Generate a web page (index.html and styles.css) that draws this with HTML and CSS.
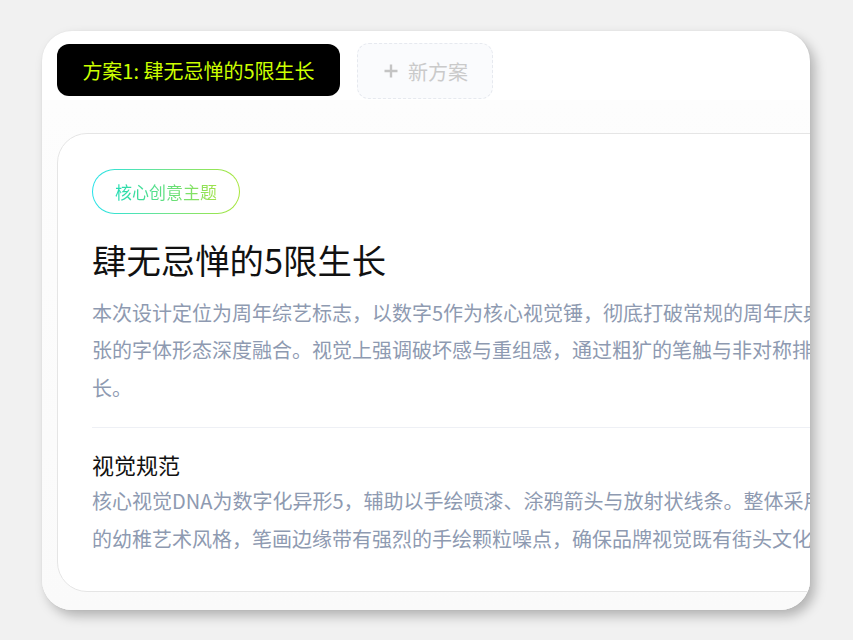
FILE: index.html
```html
<!DOCTYPE html>
<html lang="zh-CN">
<head>
<meta charset="utf-8">
<title>方案</title>
<link rel="stylesheet" href="styles.css">
</head>
<body>
<div class="panel">
  <div class="tabbar">
    <div class="tab tab-active">方案1: 肆无忌惮的5限生长</div>
    <div class="tab tab-new">
      <svg class="plus" width="14" height="14" viewBox="0 0 14 14"><path d="M7 0.5V13.5M0.5 7H13.5" stroke="#c4c4c4" stroke-width="2.4" fill="none"/></svg>
      <span>新方案</span>
    </div>
  </div>
  <div class="body">
    <div class="card">
      <div class="badge"><span class="badge-text">核心创意主题</span></div>
      <h1 class="title">肆无忌惮的5限生长</h1>
      <p class="desc">本次设计定位为周年综艺标志，以数字5作为核心视觉锤，彻底打破常规的周年庆典框架，与极度夸张的字体形态深度融合。视觉上强调破坏感与重组感，通过粗犷的笔触与非对称排版，展现出野蛮生长。</p>
      <div class="divider"></div>
      <h2 class="subtitle">视觉规范</h2>
      <p class="desc">核心视觉DNA为数字化异形5，辅助以手绘喷漆、涂鸦箭头与放射状线条。整体采用类似儿童涂鸦般的幼稚艺术风格，笔画边缘带有强烈的手绘颗粒噪点，确保品牌视觉既有街头文化的张扬与活力。</p>
    </div>
  </div>
</div>
</body>
</html>
```

FILE: styles.css
```css
html, body {
  margin: 0;
  padding: 0;
}
body {
  width: 853px;
  height: 640px;
  background: #f1f1f1;
  font-family: "Noto Sans CJK SC", "Noto Sans", sans-serif;
  overflow: hidden;
}
.panel {
  margin: 31px 0 0 42px;
  width: 768px;
  height: 579px;
  background: #ffffff;
  border-radius: 30px;
  box-shadow: 5px 6px 12px rgba(0, 0, 0, 0.26), 0 0 2px rgba(0, 0, 0, 0.06);
  overflow: hidden;
  display: flex;
  flex-direction: column;
}
.tabbar {
  height: 69px;
  box-sizing: border-box;
  padding: 12px 15px 0;
  display: flex;
  align-items: flex-start;
  gap: 17px;
  flex: none;
}
.tab {
  box-sizing: border-box;
  border-radius: 12px;
  font-size: 20px;
  display: flex;
  align-items: center;
  white-space: nowrap;
  flex: none;
}
.tab-active {
  height: 52px;
  margin-top: 1px;
  width: 283px;
  justify-content: center;
  background: #000;
  color: #ccff00;
}
.tab-new {
  height: 56px;
  width: 136px;
  padding: 0 0 0 26px;
  gap: 10px;
  background: #fafbfd;
  border: 1px dashed #e6e9ef;
  color: #cacaca;
}
.plus {
  display: block;
  flex: none;
}
.body {
  flex: 1;
  padding: 33px 0 18px 15px;
  background: linear-gradient(180deg, #fdfdfd 0%, #fafafa 100%);
  display: flex;
  align-items: stretch;
  min-height: 0;
}
.card {
  flex: none;
  width: 954px;
  box-sizing: border-box;
  padding: 35px 34px 34px;
  background: #ffffff;
  border: 1px solid #e5e5e5;
  border-radius: 30px;
  display: flex;
  flex-direction: column;
  align-items: flex-start;
}
.badge {
  box-sizing: border-box;
  height: 46px;
  padding: 0 22px;
  border-radius: 23px;
  border: 1.5px solid transparent;
  background:
    linear-gradient(#fff, #fff) padding-box,
    linear-gradient(90deg, #22e2ea 0%, #6fe48e 50%, #a8e63a 100%) border-box;
  display: flex;
  align-items: center;
}
.badge-text {
  font-size: 17px;
  background: linear-gradient(90deg, #22dcb4 0%, #a0e24a 100%);
  -webkit-background-clip: text;
  background-clip: text;
  color: transparent;
}
.title {
  margin: 23px 0 0;
  font-size: 34.4px;
  line-height: 44px;
  font-weight: 400;
  color: #111111;
}
.desc {
  margin: 13px 0 0;
  width: 882px;
  font-size: 20px;
  line-height: 37.5px;
  color: #8e9ab1;
}
.divider {
  align-self: stretch;
  height: 1px;
  background: #eef0f5;
  margin-top: 21px;
}
.subtitle {
  margin: 21px 0 0;
  font-size: 22px;
  line-height: 30px;
  font-weight: 400;
  color: #111111;
}
.subtitle + .desc {
  margin-top: 3px;
}
```
